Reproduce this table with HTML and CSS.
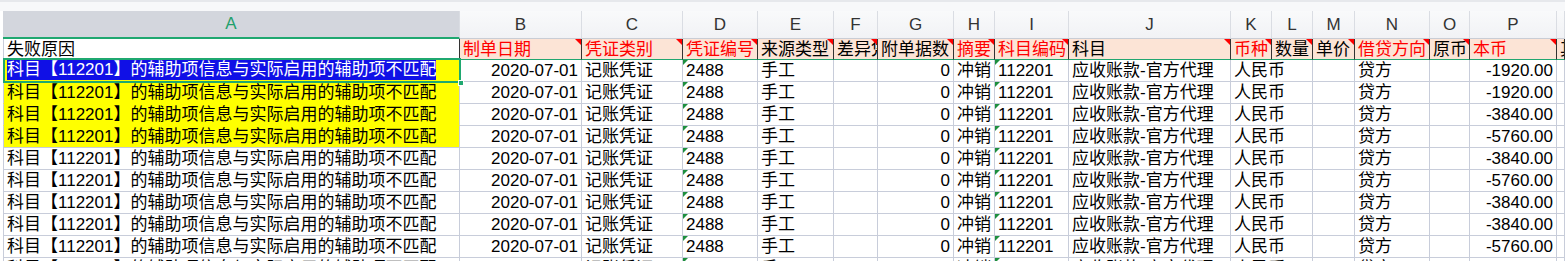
FILE: index.html
```html
<!DOCTYPE html>
<html lang="zh-CN">
<head>
<meta charset="utf-8">
<title>Sheet</title>
<link rel="stylesheet" href="styles.css">
</head>
<body>
<div class="topbar"></div>
<div class="sheet">
  <div class="col cur">A</div>
  <div class="col">B</div>
  <div class="col">C</div>
  <div class="col">D</div>
  <div class="col">E</div>
  <div class="col">F</div>
  <div class="col">G</div>
  <div class="col">H</div>
  <div class="col">I</div>
  <div class="col">J</div>
  <div class="col">K</div>
  <div class="col">L</div>
  <div class="col">M</div>
  <div class="col">N</div>
  <div class="col">O</div>
  <div class="col">P</div>
  <div class="col"></div>

  <div class="h first">失败原因</div>
  <div class="h pe red cm">制单日期</div>
  <div class="h pe red cm">凭证类别</div>
  <div class="h pe red cm">凭证编号</div>
  <div class="h pe cm">来源类型</div>
  <div class="h pe cm">差异凭证</div>
  <div class="h pe cm">附单据数</div>
  <div class="h pe red cm">摘要</div>
  <div class="h pe red cm">科目编码</div>
  <div class="h pe cm">科目</div>
  <div class="h pe red cm">币种</div>
  <div class="h pe cm">数量</div>
  <div class="h pe cm">单价</div>
  <div class="h pe red cm">借贷方向</div>
  <div class="h pe cm">原币</div>
  <div class="h pe red cm">本币</div>
  <div class="h pe">其他</div>

  <div class="c a y sel"><span class="selt">科目【112201】的辅助项信息与实际启用的辅助项不匹配</span><span class="handle"></span></div>
  <div class="c r">2020-07-01</div><div class="c">记账凭证</div><div class="c t">2488</div><div class="c">手工</div><div class="c"></div><div class="c r">0</div><div class="c">冲销</div><div class="c t">112201</div><div class="c">应收账款-官方代理</div><div class="c k">人民币</div><div class="c"></div><div class="c"></div><div class="c">贷方</div><div class="c"></div><div class="c r">-1920.00</div><div class="c"></div>

  <div class="c a y">科目【112201】的辅助项信息与实际启用的辅助项不匹配</div>
  <div class="c r">2020-07-01</div><div class="c">记账凭证</div><div class="c t">2488</div><div class="c">手工</div><div class="c"></div><div class="c r">0</div><div class="c">冲销</div><div class="c t">112201</div><div class="c">应收账款-官方代理</div><div class="c k">人民币</div><div class="c"></div><div class="c"></div><div class="c">贷方</div><div class="c"></div><div class="c r">-1920.00</div><div class="c"></div>

  <div class="c a y">科目【112201】的辅助项信息与实际启用的辅助项不匹配</div>
  <div class="c r">2020-07-01</div><div class="c">记账凭证</div><div class="c t">2488</div><div class="c">手工</div><div class="c"></div><div class="c r">0</div><div class="c">冲销</div><div class="c t">112201</div><div class="c">应收账款-官方代理</div><div class="c k">人民币</div><div class="c"></div><div class="c"></div><div class="c">贷方</div><div class="c"></div><div class="c r">-3840.00</div><div class="c"></div>

  <div class="c a y last">科目【112201】的辅助项信息与实际启用的辅助项不匹配</div>
  <div class="c r">2020-07-01</div><div class="c">记账凭证</div><div class="c t">2488</div><div class="c">手工</div><div class="c"></div><div class="c r">0</div><div class="c">冲销</div><div class="c t">112201</div><div class="c">应收账款-官方代理</div><div class="c k">人民币</div><div class="c"></div><div class="c"></div><div class="c">贷方</div><div class="c"></div><div class="c r">-5760.00</div><div class="c"></div>

  <div class="c a">科目【112201】的辅助项信息与实际启用的辅助项不匹配</div>
  <div class="c r">2020-07-01</div><div class="c">记账凭证</div><div class="c t">2488</div><div class="c">手工</div><div class="c"></div><div class="c r">0</div><div class="c">冲销</div><div class="c t">112201</div><div class="c">应收账款-官方代理</div><div class="c k">人民币</div><div class="c"></div><div class="c"></div><div class="c">贷方</div><div class="c"></div><div class="c r">-3840.00</div><div class="c"></div>

  <div class="c a">科目【112201】的辅助项信息与实际启用的辅助项不匹配</div>
  <div class="c r">2020-07-01</div><div class="c">记账凭证</div><div class="c t">2488</div><div class="c">手工</div><div class="c"></div><div class="c r">0</div><div class="c">冲销</div><div class="c t">112201</div><div class="c">应收账款-官方代理</div><div class="c k">人民币</div><div class="c"></div><div class="c"></div><div class="c">贷方</div><div class="c"></div><div class="c r">-5760.00</div><div class="c"></div>

  <div class="c a">科目【112201】的辅助项信息与实际启用的辅助项不匹配</div>
  <div class="c r">2020-07-01</div><div class="c">记账凭证</div><div class="c t">2488</div><div class="c">手工</div><div class="c"></div><div class="c r">0</div><div class="c">冲销</div><div class="c t">112201</div><div class="c">应收账款-官方代理</div><div class="c k">人民币</div><div class="c"></div><div class="c"></div><div class="c">贷方</div><div class="c"></div><div class="c r">-3840.00</div><div class="c"></div>

  <div class="c a">科目【112201】的辅助项信息与实际启用的辅助项不匹配</div>
  <div class="c r">2020-07-01</div><div class="c">记账凭证</div><div class="c t">2488</div><div class="c">手工</div><div class="c"></div><div class="c r">0</div><div class="c">冲销</div><div class="c t">112201</div><div class="c">应收账款-官方代理</div><div class="c k">人民币</div><div class="c"></div><div class="c"></div><div class="c">贷方</div><div class="c"></div><div class="c r">-3840.00</div><div class="c"></div>

  <div class="c a">科目【112201】的辅助项信息与实际启用的辅助项不匹配</div>
  <div class="c r">2020-07-01</div><div class="c">记账凭证</div><div class="c t">2488</div><div class="c">手工</div><div class="c"></div><div class="c r">0</div><div class="c">冲销</div><div class="c t">112201</div><div class="c">应收账款-官方代理</div><div class="c k">人民币</div><div class="c"></div><div class="c"></div><div class="c">贷方</div><div class="c"></div><div class="c r">-5760.00</div><div class="c"></div>

  <div class="c a">科目【112201】的辅助项信息与实际启用的辅助项不匹配</div>
  <div class="c r">2020-07-01</div><div class="c">记账凭证</div><div class="c t">2488</div><div class="c">手工</div><div class="c"></div><div class="c r">0</div><div class="c">冲销</div><div class="c t">112201</div><div class="c">应收账款-官方代理</div><div class="c k">人民币</div><div class="c"></div><div class="c"></div><div class="c">贷方</div><div class="c"></div><div class="c r">-3840.00</div><div class="c"></div>
</div>
</body>
</html>
```
FILE: styles.css
```css
* { box-sizing: border-box; }
html, body {
  margin: 0;
  padding: 0;
  background: #fff;
  overflow: hidden;
}
body {
  width: 1565px;
  height: 261px;
  font-family: "Liberation Sans", "Noto Sans CJK SC", sans-serif;
  font-size: 17px;
  color: #000;
}
.topbar {
  height: 11px;
  background: #f7f8fa;
  border-top: 2px solid #e6e8ec;
}
.sheet {
  display: grid;
  margin-left: 3px;
  grid-template-columns: 457px 122px 101px 75px 76px 44px 76px 41px 74px 162px 41px 41px 42px 75px 40px 87px 1fr;
  grid-template-rows: 28px 21px repeat(10, 22px);
}
.col {
  background: linear-gradient(#f9fafb, #f1f2f5);
  border-right: 1px solid #dadde3;
  border-bottom: 1px solid #c9cdd5;
  text-align: center;
  line-height: 27px;
  font-size: 17px;
  color: #333;
}
.col.cur {
  background: #d3d6dd;
  color: #1fa06c;
  border-bottom: 2px solid #1fa870;
  line-height: 26px;
}
.h {
  position: relative;
  overflow: hidden;
  white-space: nowrap;
  padding: 1px 0 0 3px;
  line-height: 19px;
  border-right: 1px solid #333;
  border-bottom: 1px solid #22a670;
}
.h.first {
  background: #fff;
  border-left: 1px solid #c8cdda;
}
.h.pe { background: #fce4d6; }
.red { color: #f00; }
.cm::after {
  content: "";
  position: absolute;
  top: 0;
  right: 0;
  border-top: 6px solid #f00;
  border-left: 6px solid transparent;
}
.c {
  position: relative;
  overflow: hidden;
  white-space: nowrap;
  padding: 1px 3px 0;
  line-height: 20px;
  border-right: 1px solid #c8cdda;
  border-bottom: 1px solid #c8cdda;
}
.c.a { border-left: 1px solid #c8cdda; }
.c.r { text-align: right; }
.c.k {
  overflow: visible;
  border-right-color: transparent;
}
.c.y { background: #ffff00; border-bottom-color: #ffff00; }
.c.y.last { border-bottom-color: #c8cdda; }
.t::before {
  content: "";
  position: absolute;
  top: 0;
  left: 0;
  border-top: 5px solid #1e8f3e;
  border-right: 5px solid transparent;
}
.sel {
  overflow: visible;
  z-index: 2;
}
.sel::after {
  content: "";
  position: absolute;
  left: -1px;
  top: -2px;
  right: -2px;
  bottom: -2px;
  border: 2px solid #1fa870;
}
.selt {
  display: inline-block;
  background: #1010e6;
  color: #fff;
  line-height: 20px;
  vertical-align: top;
  margin-top: -1px;
}
.handle {
  position: absolute;
  right: -5px;
  bottom: -5px;
  width: 6px;
  height: 6px;
  background: #1fa870;
  border: 1px solid #fff;
  z-index: 3;
}
```
